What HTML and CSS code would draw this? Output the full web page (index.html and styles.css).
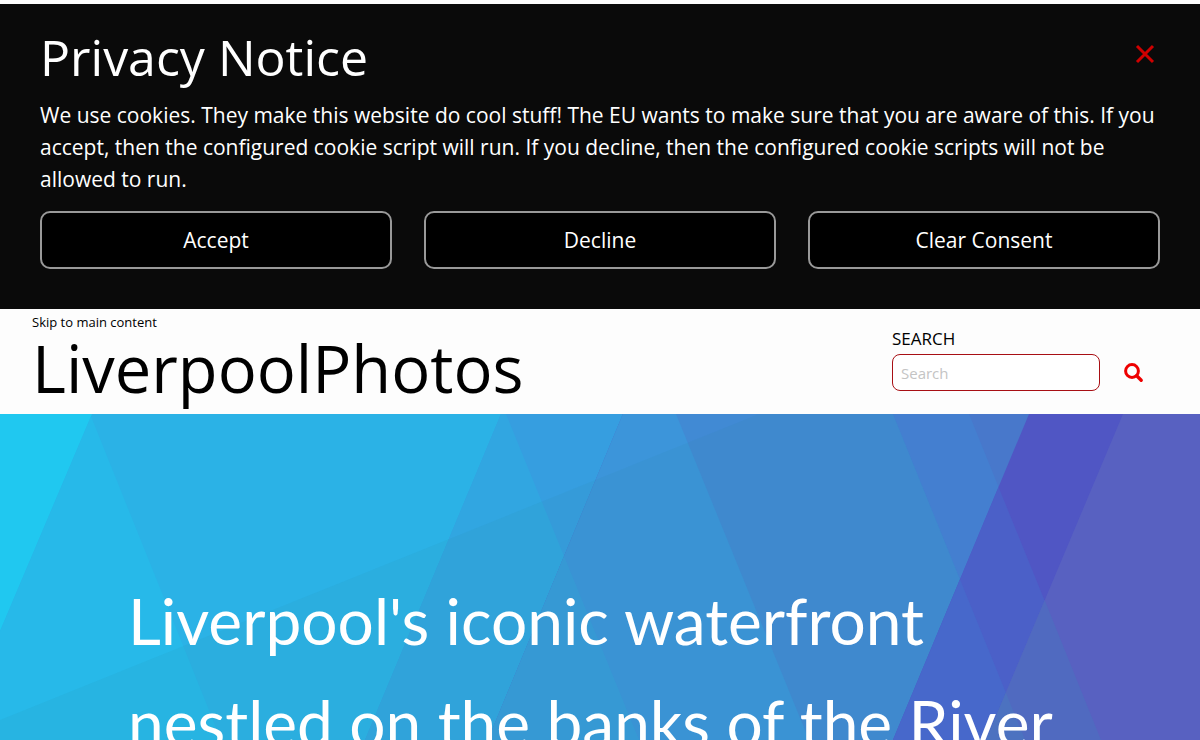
FILE: index.html
```html
<!DOCTYPE html>
<html lang="en">
<head>
<meta charset="utf-8">
<meta name="viewport" content="width=device-width, initial-scale=1">
<title>LiverpoolPhotos</title>
<link rel="stylesheet" href="styles.css">
</head>
<body>
<section class="notice" aria-labelledby="notice-title">
  <div class="notice-head">
    <h2 class="notice-title" id="notice-title">Privacy Notice</h2>
    <button class="notice-close" type="button" aria-label="Close">
      <svg width="20" height="20" viewBox="0 0 20 20" aria-hidden="true"><path d="M2 2L18 18M18 2L2 18" fill="none" stroke="#d00000" stroke-width="3"/></svg>
    </button>
  </div>
  <p class="notice-text">We use cookies. They make this website do cool stuff! The EU wants to make sure that you are aware of this. If you accept, then the configured cookie script will run. If you decline, then the configured cookie scripts will not be allowed to run.</p>
  <div class="notice-actions">
    <button class="notice-button" type="button">Accept</button>
    <button class="notice-button" type="button">Decline</button>
    <button class="notice-button" type="button">Clear Consent</button>
  </div>
</section>
<header class="site-header">
  <div class="brand">
    <a class="skip-link" href="#main">Skip to main content</a>
    <h1 class="site-title">LiverpoolPhotos</h1>
  </div>
  <form class="search" role="search">
    <label class="search-label" for="search">SEARCH</label>
    <div class="search-row">
      <input class="search-input" id="search" type="search" placeholder="Search">
      <button class="search-button" type="submit" aria-label="Search">
        <svg width="20" height="20" viewBox="0 0 20 20" aria-hidden="true"><g fill="none" stroke="#ee0000"><circle cx="8" cy="8" r="6.4" stroke-width="3"/><path d="M12.7 12.7L17.2 17.2" stroke-width="3.4" stroke-linecap="round"/></g></svg>
      </button>
    </div>
  </form>
</header>
<main class="hero" id="main">
  <svg class="hero-art" viewBox="0 0 1200 326" preserveAspectRatio="xMidYMin slice" aria-hidden="true">
    <defs>
      <clipPath id="band1"><path d="M92 0H1200V326H-46Z"/></clipPath>
      <clipPath id="band2"><path d="M501 0H1200V326H365Z"/></clipPath>
      <clipPath id="band3"><path d="M623 0H1200V326H488Z"/></clipPath>
      <clipPath id="band4"><path d="M1029 0H1200V326H893Z"/></clipPath>
      <clipPath id="band5"><path d="M1123 0H1200V326H986Z"/></clipPath>
    </defs>
    <path fill="#20c8f0" d="M0 0H1200V326H0Z"/>
    <g clip-path="url(#band1)">
      <path fill="#2bb2e6" d="M0 0H1200V326H0Z"/>
      <path fill="#27b9e9" d="M0 0H90L221 326H0Z"/>
    </g>
    <g clip-path="url(#band2)">
      <path fill="#369ee0" d="M0 0H1200V326H0Z"/>
      <path fill="#31a6e1" d="M0 0H506L639 326H0Z"/>
    </g>
    <g clip-path="url(#band3)">
      <path fill="#4878cb" d="M0 0H1200V326H0Z"/>
      <path fill="#447fd0" d="M0 0H969L1101 326H0Z"/>
      <path fill="#418ad4" d="M0 0H893L1025 326H0Z"/>
      <path fill="#3c95da" d="M0 0H676L809 326H0Z"/>
      <path fill="#389cda" d="M0 0H506L639 326H0Z"/>
    </g>
    <path fill="#308898" fill-opacity=".09" d="M0 306L759 0H893L1025 326H0Z"/>
    <g clip-path="url(#band4)">
      <path fill="#5056c4" d="M0 0H1200V326H0Z"/>
      <path fill="#4b60c8" d="M0 0H969L1101 326H0Z"/>
      <path fill="#4768cb" d="M0 0H893L1025 326H0Z"/>
    </g>
    <g clip-path="url(#band5)">
      <path fill="#5861c1" d="M0 0H1200V326H0Z"/>
      <path fill="#506ac0" d="M1039 172L1101 326H900Z"/>
      <path fill="#4c72c0" d="M0 0H893L1025 326H0Z"/>
    </g>
  </svg>
  <p class="hero-text">Liverpool's iconic waterfront nestled on the banks of the River</p>
</main>
</body>
</html>
```
FILE: styles.css
```css
* {
  box-sizing: border-box;
}

body {
  margin: 0;
  padding-top: 4px;
  background: #fdfdfd;
  color: #000;
  font-family: "Open Sans", "Noto Sans", sans-serif;
}

button,
input {
  font: inherit;
}

.notice {
  padding: 20px 40px 40px;
  background: #0a0a0a;
  color: #fff;
}

.notice-head {
  display: flex;
  justify-content: space-between;
  align-items: flex-start;
  margin-bottom: 8px;
}

.notice-title {
  margin: 0;
  font-size: 50px;
  font-weight: 400;
  line-height: 67px;
}

.notice-close {
  display: flex;
  padding: 20px 5px;
  border: 0;
  background: none;
}

.notice-text {
  margin: 0 0 16px;
  font-size: 21px;
  line-height: 32px;
}

.notice-actions {
  display: grid;
  grid-template-columns: repeat(3, 1fr);
  gap: 32px;
}

.notice-button {
  padding: 11px 16px;
  border: 2px solid #999;
  border-radius: 10px;
  background: #000;
  color: #fff;
  font-size: 21px;
  line-height: 32px;
}

.site-header {
  display: flex;
  justify-content: space-between;
  align-items: flex-start;
  padding: 0 48px 13px 32px;
}

.brand {
  display: flex;
  flex-direction: column;
  align-items: flex-start;
}

.skip-link {
  color: #000;
  font-size: 13px;
  line-height: 26px;
  text-decoration: none;
}

.site-title {
  margin: 0;
  font-size: 65px;
  font-weight: 400;
  line-height: 66px;
}

.search {
  width: 260px;
  padding-top: 15px;
}

.search-label {
  display: block;
  font-size: 17px;
  line-height: 30px;
}

.search-row {
  display: flex;
  align-items: center;
  gap: 16px;
}

.search-input {
  flex: 1;
  min-width: 0;
  height: 37px;
  padding: 0 8px;
  border: 1px solid #a80f14;
  border-radius: 8px;
  background: #fff;
  font-size: 15px;
  appearance: none;
}

.search-input::placeholder {
  color: #c4c4c4;
}

.search-button {
  display: flex;
  padding: 8px;
  border: 0;
  background: none;
}

.hero {
  position: relative;
  overflow: hidden;
  padding: 156px 128px;
}

.hero-art {
  position: absolute;
  inset: 0;
  width: 100%;
  height: 326px;
}

.hero-text {
  position: relative;
  margin: 0;
  color: #fff;
  font-family: Lato, sans-serif;
  font-size: 64px;
  line-height: 102px;
}
```
